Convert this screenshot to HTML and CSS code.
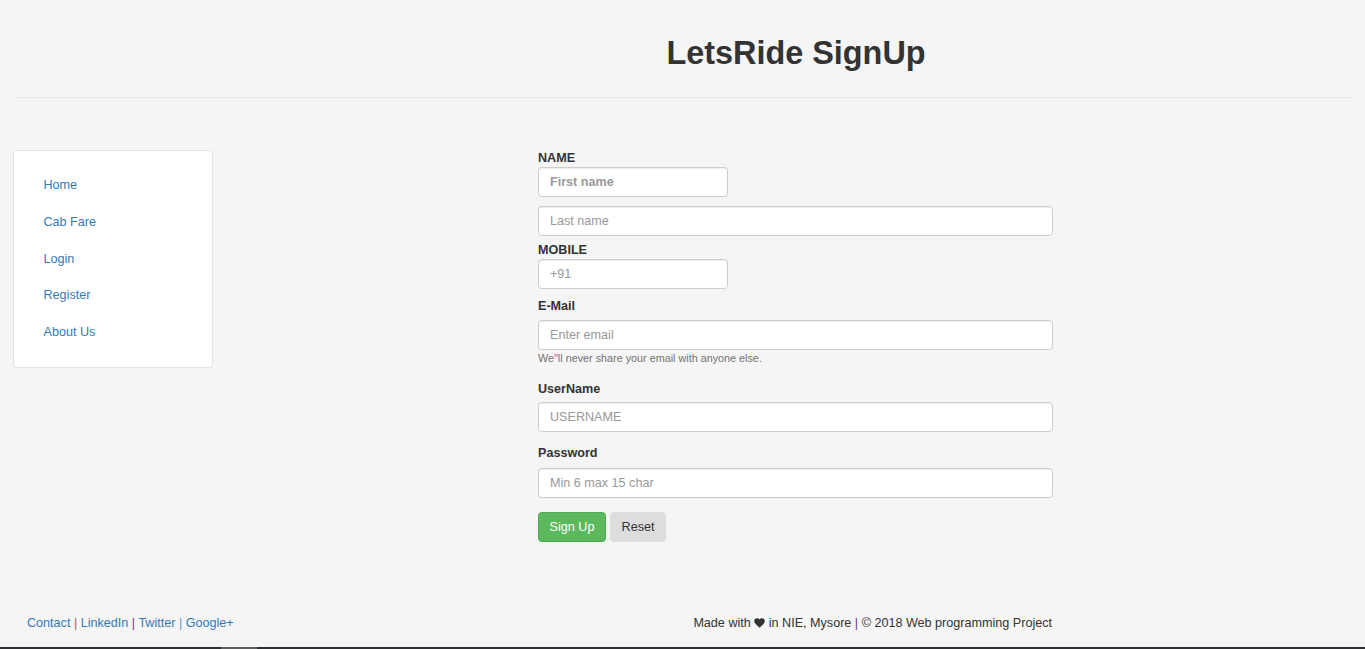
FILE: index.html
```html
<!DOCTYPE html>
<html>
<head>
<meta charset="utf-8">
<title>LetsRide SignUp</title>
<link rel="stylesheet" href="styles.css">
</head>
<body>
<div class="page">
  <header class="page-header">
    <h1 class="title">LetsRide SignUp</h1>
  </header>

  <div class="layout">
    <aside class="side-col">
      <nav class="side-card">
        <a class="nav-link" href="#">Home</a>
        <a class="nav-link" href="#">Cab Fare</a>
        <a class="nav-link" href="#">Login</a>
        <a class="nav-link" href="#">Register</a>
        <a class="nav-link" href="#">About Us</a>
      </nav>
    </aside>

    <main class="main-col">
      <form class="signup">
        <label class="lbl lbl-name">NAME</label>
        <input class="field field-short field-bold" type="text" placeholder="First name">
        <input class="field field-last" type="text" placeholder="Last name">
        <label class="lbl lbl-mobile">MOBILE</label>
        <input class="field field-short" type="text" placeholder="+91">

        <label class="lbl lbl-email">E-Mail</label>
        <input class="field" type="email" placeholder="Enter email">
        <small class="help">We"ll never share your email with anyone else.</small>

        <label class="lbl lbl-user">UserName</label>
        <input class="field" type="text" placeholder="USERNAME">

        <label class="lbl lbl-pass">Password</label>
        <input class="field" type="password" placeholder="Min 6 max 15 char">

        <div class="actions">
          <button type="button" class="btn btn-green">Sign Up</button>
          <button type="button" class="btn btn-grey">Reset</button>
        </div>
      </form>
    </main>
  </div>

  <footer class="footer">
    <div class="foot-left">
      <a href="#">Contact</a> <span class="sep sep1">|</span> <a href="#">LinkedIn</a> <span class="sep sep2">|</span> <a href="#">Twitter</a> <span class="sep sep3">|</span> <a href="#">Google+</a>
    </div>
    <div class="foot-main">
      <div class="foot-right">Made with <svg class="heart" viewBox="0 0 24 22" width="11" height="10"><path d="M12 21.5 L10.3 19.9 C4.2 14.4 0.3 10.9 0.3 6.5 C0.3 3 3 0.3 6.5 0.3 C8.5 0.3 10.7 1.3 12 2.9 C13.3 1.3 15.5 0.3 17.5 0.3 C21 0.3 23.7 3 23.7 6.5 C23.7 10.9 19.8 14.4 13.7 19.9 Z" fill="#333"/></svg> in NIE, Mysore <span class="sep sep2">|</span> © 2018 Web programming Project</div>
    </div>
  </footer>

  <div class="bottom-bar"><span class="bar-chip"></span></div>
</div>
</body>
</html>
```

FILE: styles.css
```css
* { box-sizing: border-box; }

html, body {
  margin: 0;
  padding: 0;
  background: #f5f5f5;
}

body {
  font-family: "Liberation Sans", Arial, sans-serif;
  font-size: 12.6px;
  line-height: 18px;
  color: #333;
}

a { color: #337ab7; text-decoration: none; }

.page {
  height: 649px;
  display: flex;
  flex-direction: column;
  overflow: hidden;
  background: #f5f5f5;
}

/* header */
.page-header {
  margin: 0 13px;
  padding: 35px 0 26px 227px;
  border-bottom: 1px solid #eaeaea;
}

.title {
  margin: 0;
  font-size: 32.4px;
  line-height: 36px;
  font-weight: bold;
  text-align: center;
  color: #333;
}

/* layout */
.layout {
  display: flex;
  padding-top: 50px;
}

.side-col {
  width: 227px;
  flex: none;
  padding-left: 13px;
  padding-top: 2px;
}

.side-card {
  width: 200px;
  background: #fff;
  border: 1px solid #e3e3e3;
  border-radius: 3px;
  padding: 16px 16px 17px 16px;
  display: flex;
  flex-direction: column;
  gap: 0.8px;
}

.nav-link {
  display: block;
  padding: 9px 13.5px;
  line-height: 18px;
}

.main-col {
  flex: 1;
  padding-left: 311px;
}

/* form */
.signup {
  width: 515px;
  display: flex;
  flex-direction: column;
  align-items: flex-start;
}

.lbl {
  display: block;
  font-weight: bold;
  line-height: 18px;
  margin: 0;
}

.lbl-name { margin-top: 1px; }
.lbl-mobile { margin-top: 5px; }
.lbl-email { margin-top: 8px; margin-bottom: 5px; }
.lbl-user { margin-top: 15px; margin-bottom: 4px; }
.lbl-pass { margin-top: 12px; margin-bottom: 6px; }

.field {
  display: block;
  width: 515px;
  height: 30px;
  padding: 5px 11px;
  font-family: "Liberation Sans", Arial, sans-serif;
  font-size: 12.6px;
  color: #555;
  background: #fff;
  border: 1px solid #ccc;
  border-radius: 3.6px;
  box-shadow: inset 0 1px 1px rgba(0,0,0,0.075);
  outline: none;
}

.field::placeholder { color: #999; }

.field-short { width: 190px; }
.field-bold::placeholder { font-weight: bold; }
.field-last { margin-top: 9px; }

.help {
  display: block;
  font-size: 10.8px;
  line-height: 14px;
  color: #737373;
  margin-top: 1px;
}

.actions {
  display: flex;
  gap: 4px;
  margin-top: 14px;
}

.btn {
  height: 30px;
  padding: 5px 0;
  font-family: "Liberation Sans", Arial, sans-serif;
  font-size: 12.6px;
  line-height: 18px;
  border-radius: 3.6px;
  white-space: nowrap;
  text-align: center;
  cursor: pointer;
}

.btn-green {
  width: 68px;
  background: #5cb85c;
  border: 1px solid #4cae4c;
  color: #fff;
}

.btn-grey {
  width: 56px;
  background: #dddddd;
  border: 1px solid #dddddd;
  color: #333;
}

/* footer */
.footer {
  display: flex;
  margin-top: auto;
  padding-bottom: 15px;
}

.foot-left {
  width: 227px;
  flex: none;
  padding-left: 27px;
  white-space: nowrap;
}

.foot-main {
  flex: 1;
  padding-left: 311px;
}

.foot-right {
  width: 515px;
  padding-right: 1px;
  text-align: right;
  white-space: nowrap;
  color: #333;
}

.heart { vertical-align: -1px; }

.sep1 { color: #a55a52; }
.sep2 { color: #7b2c82; }
.sep3 { color: #6f9bd0; }

.bottom-bar {
  height: 2px;
  flex: none;
  background: #2b3034;
  position: relative;
}

.bar-chip {
  position: absolute;
  left: 221px;
  top: 0;
  width: 36px;
  height: 2px;
  background: #5d5f61;
}
```
